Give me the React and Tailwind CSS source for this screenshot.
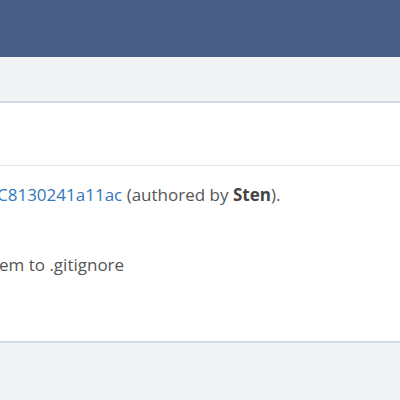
export default function App() {
  return (
    <div className="w-[400px] h-[400px] overflow-hidden bg-[#f2f3f5]" style={{ fontFamily: '"Open Sans", sans-serif' }}>
      <div className="h-[57px] bg-[#4a5d86]" />
      <div className="h-[46px] bg-[#f2f3f5] border-b-2 border-[#d0dae5]" />
      <div className="bg-white">
        <div className="h-[63px] border-b border-[#e1e8ef]" />
        <div className="h-[177px] border-b-2 border-[#d0dae5] pt-[17px] text-[17px] text-[#555] whitespace-nowrap">
          <p className="ml-[-3px] leading-[24px]">
            <a className="text-[#3577b8]">C8130241a11ac</a> (authored by <b className="font-bold text-[#444]">Sten</b>).
          </p>
          <p className="ml-[-1px] mt-[46px] leading-[24px]">em to .gitignore</p>
        </div>
      </div>
    </div>
  );
}
